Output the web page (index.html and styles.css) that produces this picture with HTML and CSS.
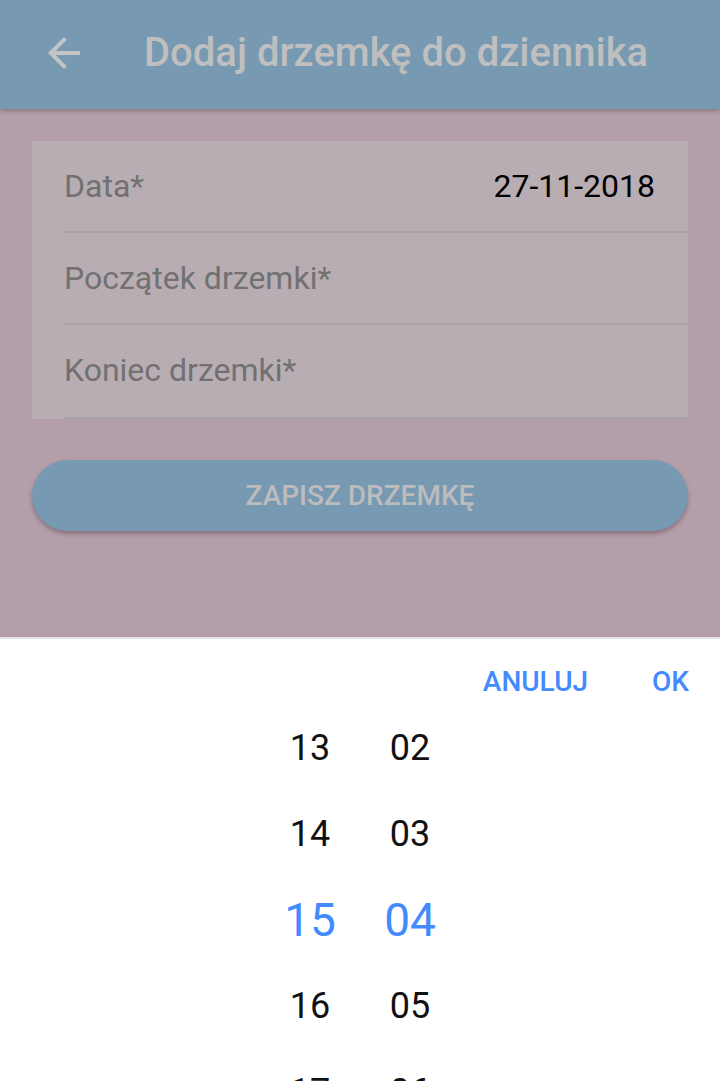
FILE: index.html
```html
<!DOCTYPE html>
<html lang="pl">
<head>
<meta charset="utf-8">
<title>Dodaj drzemkę do dziennika</title>
<link rel="stylesheet" href="styles.css">
</head>
<body>
<div class="screen">
  <header class="appbar">
    <div class="toolbar">
      <button class="back" aria-label="Wstecz">
        <svg viewBox="0 0 24 24" width="48" height="48"><path d="M20 11H7.83l5.59-5.59L12 4l-8 8 8 8 1.41-1.41L7.83 13H20v-2z" fill="currentColor"/></svg>
      </button>
      <h1 class="title">Dodaj drzemkę do dziennika</h1>
    </div>
  </header>

  <main class="content">
    <section class="card">
      <div class="row">
        <span class="label">Data*</span>
        <span class="value">27-11-2018</span>
      </div>
      <div class="row">
        <span class="label">Początek drzemki*</span>
      </div>
      <div class="row last">
        <span class="label">Koniec drzemki*</span>
      </div>
    </section>
    <button class="save">ZAPISZ DRZEMKĘ</button>
  </main>

  <div class="sheet">
    <div class="actions">
      <button class="action">ANULUJ</button>
      <button class="action">OK</button>
    </div>
    <div class="picker">
      <div class="col">
        <div class="item">13</div>
        <div class="item">14</div>
        <div class="item selected">15</div>
        <div class="item">16</div>
        <div class="item">17</div>
      </div>
      <div class="col">
        <div class="item">02</div>
        <div class="item">03</div>
        <div class="item selected">04</div>
        <div class="item">05</div>
        <div class="item">06</div>
      </div>
    </div>
  </div>
</div>
</body>
</html>
```

FILE: styles.css
```css
* { box-sizing: border-box; }

html, body {
  margin: 0;
  padding: 0;
}

body {
  width: 720px;
  height: 1081px;
  overflow: hidden;
  background: #b39ea9;
  font-family: Roboto, "Noto Sans", "Liberation Sans", sans-serif;
}

.screen {
  position: relative;
  width: 720px;
  height: 1081px;
  overflow: hidden;
}

.appbar {
  height: 109px;
  background: #7899b2;
  box-shadow: 0 2px 4px rgba(60, 40, 50, 0.35);
  position: relative;
  z-index: 1;
}

.toolbar {
  height: 105px;
  display: flex;
  align-items: center;
}

.back {
  width: 48px;
  height: 48px;
  margin-left: 40px;
  padding: 0;
  border: 0;
  background: none;
  color: #c4c4c4;
  display: flex;
}

.title {
  margin: 0 0 0 56px;
  font-size: 40px;
  font-weight: 500;
  color: #bfbfbf;
  line-height: 1;
}

.content {
  padding: 32px;
}

.card {
  background: #b8adb3;
  padding-left: 32px;
}

.row {
  height: 92px;
  border-bottom: 2px solid #a5a3a6;
  display: flex;
  align-items: center;
  justify-content: space-between;
  padding-right: 33px;
  font-size: 32px;
}

.row.last {
  height: 94px;
  padding-bottom: 2px;
}

.label {
  color: #717171;
}

.value {
  color: #000;
}

.save {
  display: block;
  width: 100%;
  height: 71px;
  margin-top: 41px;
  border: 0;
  border-radius: 36px;
  background: #7899b2;
  box-shadow: 0 3px 4px rgba(60, 40, 50, 0.35);
  color: #bcbcbc;
  font-family: inherit;
  font-size: 28px;
  font-weight: 500;
}

.sheet {
  position: absolute;
  left: 0;
  right: 0;
  bottom: 0;
  height: 444px;
  background: #fff;
  border-top: 2px solid #e4e2e3;
}

.actions {
  height: 66px;
  padding-top: 25px;
  padding-right: 31px;
  display: flex;
  justify-content: flex-end;
  gap: 64px;
}

.action {
  border: 0;
  background: none;
  padding: 0;
  height: 36px;
  line-height: 36px;
  font-family: inherit;
  font-size: 28px;
  font-weight: 500;
  color: #448aff;
}

.picker {
  display: flex;
  justify-content: center;
}

.col {
  width: 100px;
  display: flex;
  flex-direction: column;
}

.item {
  height: 86px;
  line-height: 86px;
  text-align: center;
  font-size: 36px;
  color: #111;
}

.item.selected {
  font-size: 46px;
  color: #448aff;
}
```
